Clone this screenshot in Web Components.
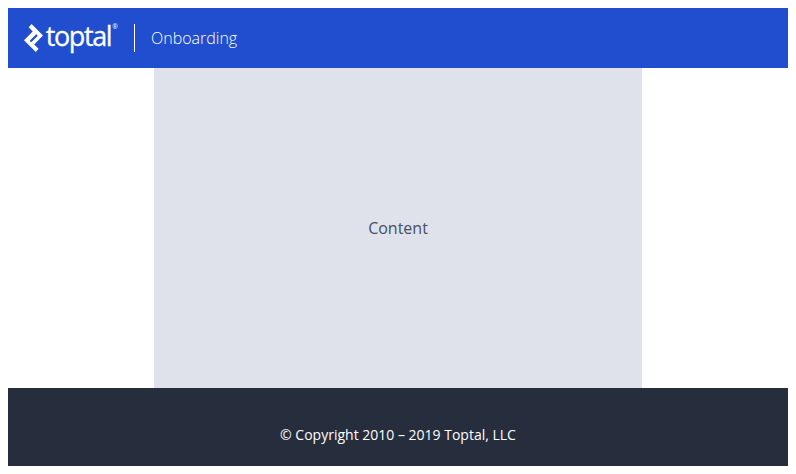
<!DOCTYPE html>
<html lang="en"><head><meta charset="utf-8"><title>Onboarding</title>
<style>body{font-family:"Open Sans",sans-serif}</style></head><body>
<page-shell><page-header>Onboarding</page-header><page-content>Content</page-content><page-footer>© Copyright 2010 – 2019 Toptal, LLC</page-footer></page-shell>
<script>
const define = (name, markup) => customElements.define(name, class extends HTMLElement {
  constructor() { super(); this.attachShadow({ mode: 'open' }).innerHTML = markup; }
});
define('page-shell', `<style>:host{display:flex;flex-direction:column}</style><slot></slot>`);
define('brand-logo', `<style>:host{display:block;width:94px;height:28px;font-weight:400}svg{display:block;overflow:visible}text{font-family:"Open Sans",sans-serif}</style>
<svg width="94" height="28" viewBox="0 0 94 28" fill="#fff" aria-label="Toptal">
<path fill-rule="evenodd" d="M7.6 0L19 11.6L10.2 20.5L14.5 24.8L11.8 28L0 16.3L8.7 7.5L4.7 3.3ZM12.2 10.2L5.7 16.7L7.3 18.3L13.8 11.8Z"/>
<text x="21.8" y="21.8" font-size="27" textLength="66.8" lengthAdjust="spacing" stroke="#fff" stroke-width=".3">toptal</text>
<text x="88.2" y="5" font-size="6.6">®</text></svg>`);
define('page-header', `<style>:host{display:flex;align-items:center;height:60px;padding:0 16px;box-sizing:border-box;background:#204ecf;color:#fff;font-size:16px;line-height:24px;font-weight:300}
i{width:1px;height:28px;background:#fff;margin:0 16px}</style><brand-logo></brand-logo><i></i><span><slot></slot></span>`);
define('page-content', `<style>:host{display:flex;align-items:center;justify-content:center;width:488px;height:320px;align-self:center;background:#dfe2ea;color:#455065;font-size:16px;line-height:24px}</style><span><slot></slot></span>`);
define('page-footer', `<style>:host{display:flex;justify-content:center;height:78px;box-sizing:border-box;padding-top:36px;background:#262d3d;color:#fff;font-size:14px;line-height:22px}</style><span><slot></slot></span>`);
</script></body></html>
